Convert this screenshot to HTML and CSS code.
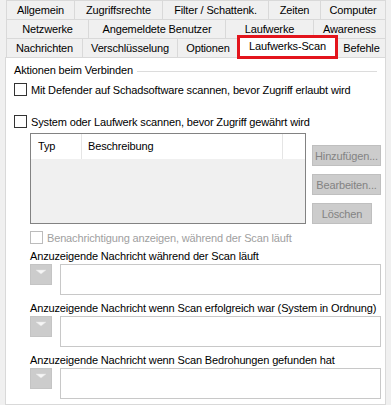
FILE: index.html
```html
<!DOCTYPE html>
<html lang="de">
<head>
    <meta charset="UTF-8">
    <title>Laufwerks-Scan</title>
    <link rel="stylesheet" href="styles.css">
</head>
<body>
<div class="tabs">
    <div class="tab-row">
        <div class="tab w69">Allgemein</div>
        <div class="tab w89">Zugriffsrechte</div>
        <div class="tab w107">Filter / Schattenk.</div>
        <div class="tab w53">Zeiten</div>
        <div class="tab w66">Computer</div>
    </div>
    <div class="tab-row">
        <div class="tab w83">Netzwerke</div>
        <div class="tab w138">Angemeldete Benutzer</div>
        <div class="tab w89">Laufwerke</div>
        <div class="tab w73">Awareness</div>
    </div>
    <div class="tab-row">
        <div class="tab w77">Nachrichten</div>
        <div class="tab w96">Verschlüsselung</div>
        <div class="tab w62">Optionen</div>
        <div class="tab active">Laufwerks-Scan</div>
        <div class="tab w49">Befehle</div>
    </div>
</div>

<div class="page">
    <div class="group-title">
        <span>Aktionen beim Verbinden</span>
        <div class="group-line"></div>
    </div>

    <div class="group-body">
        <label class="check first">
            <span class="box"></span>
            Mit Defender auf Schadsoftware scannen, bevor Zugriff erlaubt wird
        </label>

        <label class="check second">
            <span class="box"></span>
            System oder Laufwerk scannen, bevor Zugriff gewährt wird
        </label>

        <div class="indent">
            <div class="list-area">
                <div class="list">
                    <div class="list-head">
                        <div class="col col-typ">Typ</div>
                        <div class="col col-desc">Beschreibung</div>
                        <div class="col col-rest"></div>
                    </div>
                </div>
                <div class="buttons">
                    <button disabled>Hinzufügen...</button>
                    <button disabled>Bearbeiten...</button>
                    <button disabled class="short">Löschen</button>
                </div>
            </div>

            <label class="check disabled">
                <span class="box"></span>
                Benachrichtigung anzeigen, während der Scan läuft
            </label>

            <div class="msg-label first-msg">Anzuzeigende Nachricht während der Scan läuft</div>
            <div class="msg-row">
                <div class="drop">
                    <svg width="22" height="21" viewBox="0 0 22 21"><polygon points="6,6 16,6 11,10" fill="#f6f6f6" stroke="#e2e2e2" stroke-width="0.5"/></svg>
                </div>
                <div class="msg-box"></div>
            </div>

            <div class="msg-label">Anzuzeigende Nachricht wenn Scan erfolgreich war (System in Ordnung)</div>
            <div class="msg-row">
                <div class="drop">
                    <svg width="22" height="21" viewBox="0 0 22 21"><polygon points="6,6 16,6 11,10" fill="#f6f6f6" stroke="#e2e2e2" stroke-width="0.5"/></svg>
                </div>
                <div class="msg-box"></div>
            </div>

            <div class="msg-label">Anzuzeigende Nachricht wenn Scan Bedrohungen gefunden hat</div>
            <div class="msg-row">
                <div class="drop">
                    <svg width="22" height="21" viewBox="0 0 22 21"><polygon points="6,6 16,6 11,10" fill="#f6f6f6" stroke="#e2e2e2" stroke-width="0.5"/></svg>
                </div>
                <div class="msg-box"></div>
            </div>
        </div>
    </div>
</div>
</body>
</html>
```
FILE: styles.css
```css
* { box-sizing: border-box; }

body {
    margin: 0;
    background: #f0f0f0;
    font-family: 'Liberation Sans', Arial, sans-serif;
    font-size: 11px;
    letter-spacing: -0.15px;
    color: #000;
}

/* tabs */
.tab-row {
    display: flex;
    align-items: flex-start;
    height: 20px;
    margin-left: 6px;
}
.tab-row + .tab-row { margin-top: -1px; }

.tab {
    height: 20px;
    line-height: 18px;
    text-align: center;
    white-space: nowrap;
    background: #f0f0f0;
    border: 1px solid #d9d9d9;
    margin-left: -1px;
}
.tab:first-child { margin-left: 0; }

.w49 { width: 49px; }
.w53 { width: 53px; }
.w62 { width: 62px; }
.w66 { width: 66px; }
.w69 { width: 69px; }
.w73 { width: 73px; }
.w77 { width: 77px; }
.w83 { width: 83px; }
.w89 { width: 89px; }
.w96 { width: 96px; }
.w107 { width: 107px; }
.w138 { width: 138px; }

.tab.active {
    position: relative;
    z-index: 1;
    width: 101px;
    height: 24px;
    line-height: 17px;
    margin-top: -3px;
    margin-left: -2px;
    background: #fff;
    border: 3px solid #e3141c;
}
.tab.active + .tab { margin-left: -1px; }

/* page */
.page {
    margin: -1px 5px 0 5px;
    height: 348px;
    background: #fff;
    border: 1px solid #d9d9d9;
}

.group-title {
    display: flex;
    align-items: center;
    padding: 4px 8px 0 8px;
    line-height: 16px;
}
.group-line {
    flex: 1;
    height: 1px;
    margin: 2px 0 0 4px;
    background: #dcdcdc;
}

.group-body { padding-left: 8px; }

.check {
    display: flex;
    align-items: center;
    gap: 4px;
    height: 15px;
    white-space: nowrap;
}
.check.first { margin-top: 4px; }
.check.second { margin-top: 17px; }

.box {
    width: 13px;
    height: 13px;
    background: #fff;
    border: 1px solid #333;
    flex-shrink: 0;
}

.indent { margin-left: 16px; }

/* list + buttons */
.list-area {
    display: flex;
    margin-top: 4px;
}
.list {
    width: 276px;
    height: 91px;
    border: 1px solid #828282;
    background: #f0f0f0;
}
.list-head {
    display: flex;
    height: 25px;
    background: #fff;
}
.col {
    line-height: 24px;
    padding-left: 6px;
    border-right: 1px solid #e5e5e5;
}
.col-typ { width: 51px; padding-left: 7px; }
.col-desc { width: 201px; }
.col-rest { flex: 1; border-right: none; }

.buttons {
    display: flex;
    flex-direction: column;
    gap: 8px;
    margin: 12px 0 0 6px;
}
button {
    width: 69px;
    height: 21px;
    padding: 0;
    font: inherit;
    letter-spacing: inherit;
    color: #838383;
    background: #cccccc;
    border: 1px solid #bfbfbf;
}
button.short { width: 60px; }

.check.disabled {
    margin-top: 6px;
    color: #a0a0a0;
}
.check.disabled .box { border-color: #bcbcbc; }

/* messages */
.msg-label {
    line-height: 16px;
    margin-top: 5px;
    white-space: nowrap;
}
.msg-label.first-msg { margin-top: 3px; }

.msg-row {
    display: flex;
    align-items: flex-start;
    gap: 8px;
}
.drop {
    width: 22px;
    height: 21px;
    background: #cccccc;
    border: 1px solid #c4c4c4;
}
.drop svg { display: block; margin: -1px; }

.msg-box {
    width: 321px;
    height: 31px;
    background: #fff;
    border: 1px solid #c8c8c8;
}
```
